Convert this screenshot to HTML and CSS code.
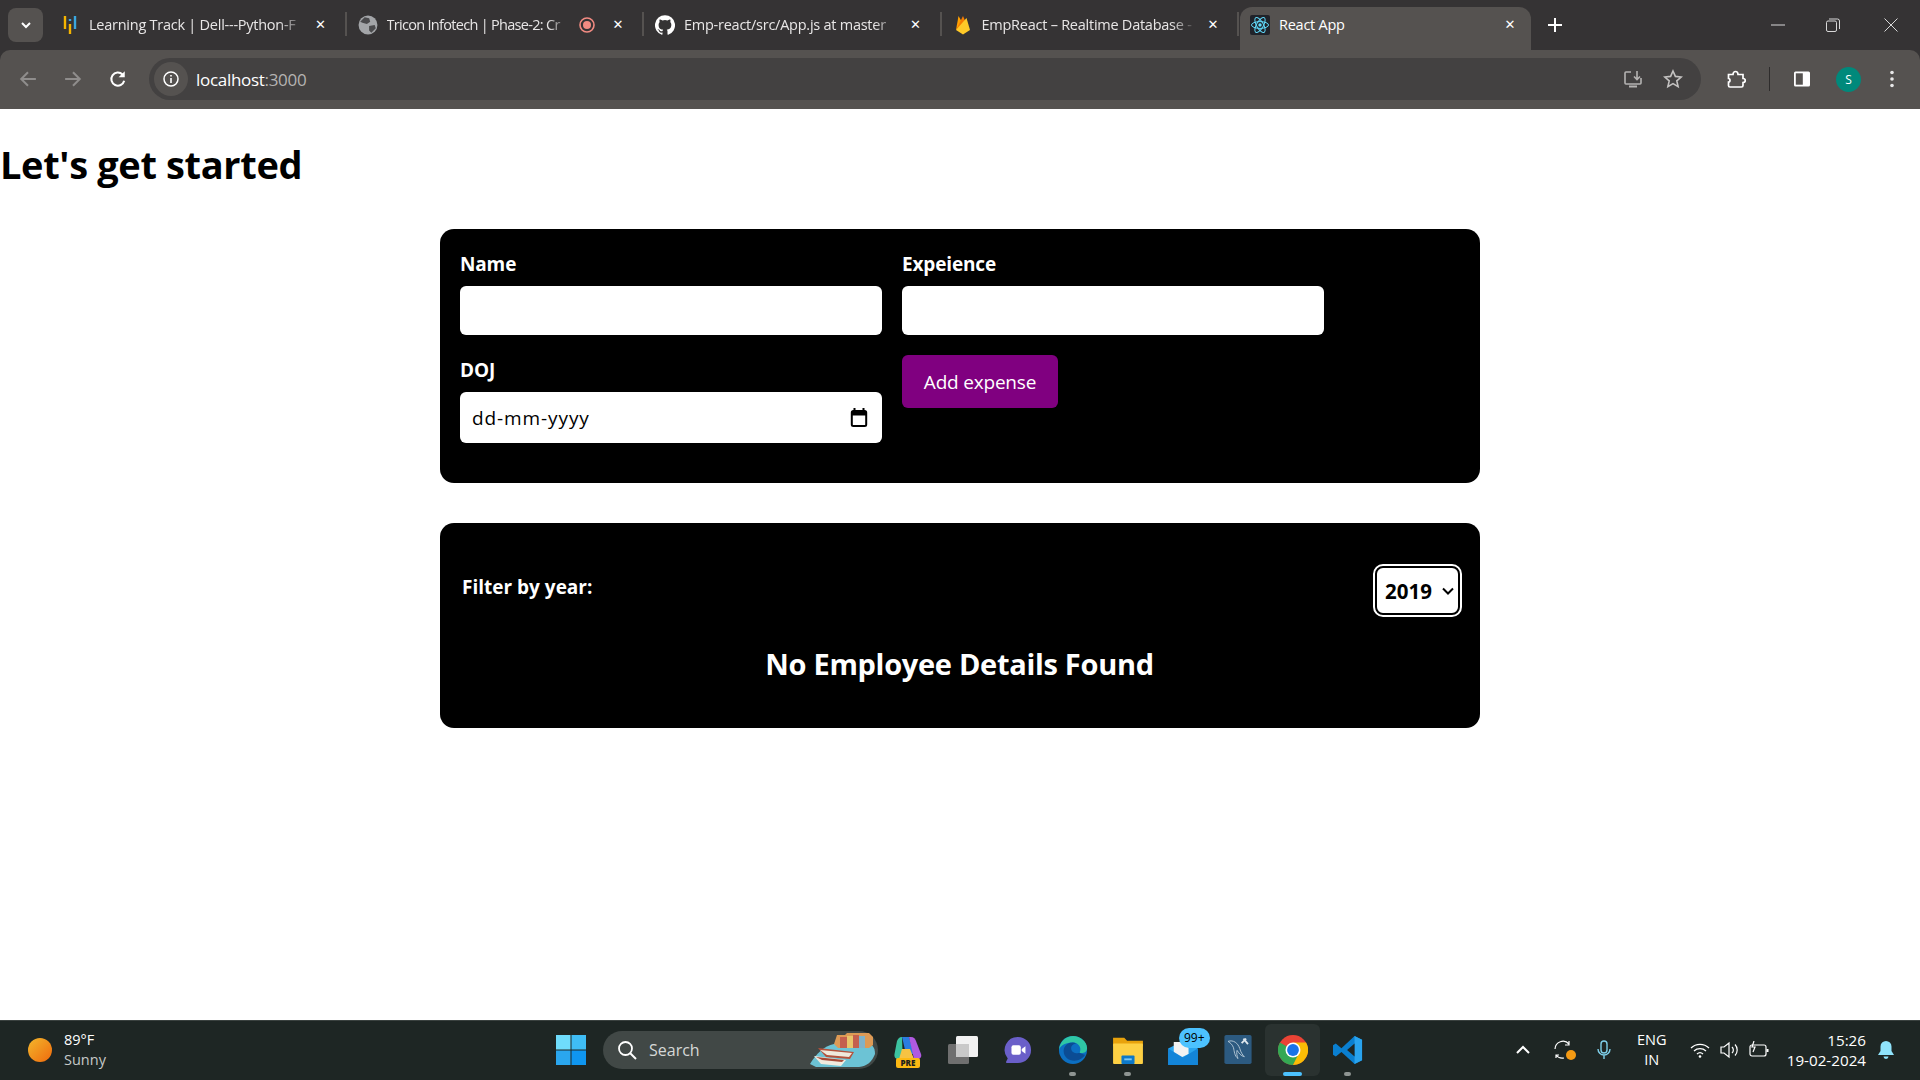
FILE: index.html
```html
<!DOCTYPE html>
<html>
<head>
    <title>React App</title>
    <link rel="stylesheet" href="styles.css">
</head>
<body>
    <div class="browser-top">
        <div class="tab-strip">
            <div class="tab-search">
                <svg width="12" height="12" viewBox="0 0 12 12"><path d="M2 4l4 4 4-4" fill="none" stroke="#fff" stroke-width="2"/></svg>
            </div>
            <div class="tab">
                <svg class="favicon" viewBox="0 0 16 20"><path d="M3 1v13" stroke="#f5b400" stroke-width="2.4"/><path d="M8 9v10" stroke="#f5b400" stroke-width="2.4"/><path d="M8 4v2" stroke="#3aa7e0" stroke-width="2.4"/><path d="M13 1v13" stroke="#3aa7e0" stroke-width="2.4"/></svg>
                <span class="tab-title">Learning Track | Dell---Python-F</span>
                <span class="tab-close">&#10005;</span>
            </div>
            <div class="tab">
                <svg class="favicon" viewBox="0 0 18 18"><circle cx="9" cy="9" r="8.5" fill="#a3a5a8"/><path d="M6 2l4 1 1 3-3 2-4-1-2-1zM10 10l5-1 1 3-4 4-2-2z" fill="#4a4a4c"/></svg>
                <span class="tab-title tab-title-tight">Tricon Infotech | Phase-2: Cr</span>
                <svg class="tab-rec" viewBox="0 0 16 16"><circle cx="8" cy="8" r="7" fill="none" stroke="#f28b82" stroke-width="1.6"/><circle cx="8" cy="8" r="4" fill="#f28b82"/></svg>
                <span class="tab-close">&#10005;</span>
            </div>
            <div class="tab">
                <svg class="favicon" viewBox="0 0 24 24"><path fill="#fff" d="M12 .3a12 12 0 0 0-3.8 23.4c.6.1.8-.3.8-.6v-2c-3.3.7-4-1.6-4-1.6-.6-1.4-1.4-1.8-1.4-1.8-1-.7.1-.7.1-.7 1.2 0 1.9 1.2 1.9 1.2 1 1.8 2.8 1.3 3.5 1 0-.8.4-1.3.7-1.6-2.7-.3-5.5-1.3-5.5-6 0-1.2.5-2.3 1.3-3.1-.2-.4-.6-1.6 0-3.2 0 0 1-.3 3.4 1.2a11.5 11.5 0 0 1 6 0c2.3-1.5 3.3-1.2 3.3-1.2.6 1.6.2 2.8 0 3.2.9.8 1.3 1.9 1.3 3.2 0 4.6-2.8 5.6-5.5 5.9.5.4.9 1 .9 2.2v3.3c0 .3.1.7.8.6A12 12 0 0 0 12 .3"/></svg>
                <span class="tab-title">Emp-react/src/App.js at master</span>
                <span class="tab-close">&#10005;</span>
            </div>
            <div class="tab">
                <svg class="favicon" viewBox="0 0 16 20"><path d="M1 15L3.5 1 7 7z" fill="#ffa000"/><path d="M1 15l7-14 3 7z" fill="#f57c00"/><path d="M1 15L11.5 3 15 15l-7 4.5z" fill="#ffca28"/></svg>
                <span class="tab-title">EmpReact – Realtime Database -</span>
                <span class="tab-close">&#10005;</span>
            </div>
            <div class="tab tab-active">
                <svg class="favicon" viewBox="0 0 20 20"><rect width="20" height="20" rx="2" fill="#20232a"/><g fill="none" stroke="#61dafb" stroke-width="1"><ellipse cx="10" cy="10" rx="8.5" ry="3.4"/><ellipse cx="10" cy="10" rx="8.5" ry="3.4" transform="rotate(60 10 10)"/><ellipse cx="10" cy="10" rx="8.5" ry="3.4" transform="rotate(120 10 10)"/></g><circle cx="10" cy="10" r="1.7" fill="#61dafb"/></svg>
                <span class="tab-title">React App</span>
                <span class="tab-close">&#10005;</span>
            </div>
            <svg class="new-tab" width="14" height="14" viewBox="0 0 14 14"><path d="M7 0v14M0 7h14" stroke="#fff" stroke-width="2"/></svg>
            <div class="window-controls">
                <svg class="win-min" width="14" height="14" viewBox="0 0 14 14"><path d="M0 7h14" stroke="#d8d8d8"/></svg>
                <svg class="win-restore" width="14" height="14" viewBox="0 0 14 14"><rect x=".5" y="3" width="10" height="10.5" rx="1.5" fill="none" stroke="#d8d8d8"/><path d="M3 1h8.5a2 2 0 0 1 2 2v8" fill="none" stroke="#d8d8d8"/></svg>
                <svg width="14" height="14" viewBox="0 0 14 14"><path d="M.5.5l13 13M13.500.5l-13 13" stroke="#d8d8d8"/></svg>
            </div>
        </div>
        <div class="toolbar">
            <svg class="nav-icon" viewBox="0 0 16 16"><path d="M15 8H2M8 2L2 8l6 6" fill="none" stroke="#8f8d8c" stroke-width="1.8"/></svg>
            <svg class="nav-icon" viewBox="0 0 16 16"><path d="M1 8h13M8 2l6 6-6 6" fill="none" stroke="#8f8d8c" stroke-width="1.8"/></svg>
            <svg class="nav-icon" viewBox="0 0 16 16"><path d="M13.500 9.500A5.800 5.800 0 1 1 12 4" fill="none" stroke="#fff" stroke-width="1.800"/><path d="M14 1v5.500H8.500z" fill="#fff"/></svg>
            <div class="address-bar">
                <div class="site-info">
                    <svg width="16" height="16" viewBox="0 0 16 16"><circle cx="8" cy="8" r="7" fill="none" stroke="#fff" stroke-width="1.500"/><path d="M8 7v5M8 4v1.600" stroke="#fff" stroke-width="1.600"/></svg>
                </div>
                <span class="url">localhost<span class="url-port">:3000</span></span>
                <svg class="addr-icon" width="20" height="20" viewBox="0 0 20 20"><path d="M8 3H3a1 1 0 0 0-1 1v10a1 1 0 0 0 1 1h14a1 1 0 0 0 1-1v-5" fill="none" stroke="#b5b3b2" stroke-width="1.600"/><path d="M6 17.500h8" stroke="#b5b3b2" stroke-width="2"/><path d="M14 2v8M11 7.500l3 3 3-3" fill="none" stroke="#b5b3b2" stroke-width="1.600"/></svg>
                <svg class="addr-icon" width="20" height="20" viewBox="0 0 20 20"><path d="M10 2l2.400 5.400 5.800.6-4.400 3.900 1.300 5.700-5.100-3-5.100 3 1.300-5.700L1.800 8l5.800-.6z" fill="none" stroke="#c4c2c1" stroke-width="1.600"/></svg>
            </div>
            <div class="toolbar-right">
                <svg width="20" height="20" viewBox="0 0 20 20"><path d="M4 18a1.500 1.500 0 0 1-1.500-1.500v-3.500c2 0 2-3.500 0-3.500V5.500H7c0-4 5-4 5 0h5v4c3 0 3 4 0 4v3a1.500 1.500 0 0 1-1.500 1.500z" fill="none" stroke="#fff" stroke-width="1.700"/></svg>
                <span class="toolbar-sep"></span>
                <svg width="18" height="18" viewBox="0 0 18 18"><rect x="1" y="1.500" width="16" height="15" rx="1.500" fill="#fff"/><rect x="2.800" y="3.300" width="7" height="11.400" fill="#555250"/></svg>
                <span class="avatar">S</span>
                <svg class="menu-dots" width="4" height="18" viewBox="0 0 4 18"><circle cx="2" cy="2.500" r="1.800" fill="#e8e8e8"/><circle cx="2" cy="9" r="1.800" fill="#e8e8e8"/><circle cx="2" cy="15.500" r="1.800" fill="#e8e8e8"/></svg>
            </div>
        </div>
    </div>

    <div class="page">
        <h2 class="page-title">Let's get started</h2>

        <div class="card form-card">
            <div class="form-grid">
                <div class="field">
                    <label>Name</label>
                    <input type="text" class="text-input">
                </div>
                <div class="field">
                    <label>Expeience</label>
                    <input type="text" class="text-input">
                </div>
                <div class="field">
                    <label>DOJ</label>
                    <div class="date-input">
                        <span>dd-mm-yyyy</span>
                        <svg width="18" height="20" viewBox="0 0 18 20"><path d="M4.500 0v4M13.500 0v4" stroke="#000" stroke-width="2"/><rect x="1.800" y="3" width="14.400" height="15" rx="1.500" fill="none" stroke="#000" stroke-width="2"/><path d="M2 3h14v4.500H2z" fill="#000"/></svg>
                    </div>
                </div>
                <div class="field">
                    <button class="add-btn">Add expense</button>
                </div>
            </div>
        </div>

        <div class="card filter-card">
            <div class="filter-row">
                <span class="filter-label">Filter by year:</span>
                <select class="year-select">
                    <option>2019</option>
                    <option>2020</option>
                    <option>2021</option>
                    <option>2022</option>
                </select>
            </div>
            <h2 class="empty-msg">No Employee Details Found</h2>
        </div>
    </div>

    <div class="taskbar">
        <div class="weather">
            <span class="sun"></span>
            <div class="weather-text">
                <div>89°F</div>
                <div class="weather-sub">Sunny</div>
            </div>
        </div>
        <div class="task-center">
            <svg class="win-logo" width="30" height="30" viewBox="0 0 30 30"><rect width="14.500" height="14.500" fill="#6fdcfb"/><rect x="15.500" width="14.500" height="14.500" fill="#3fbdf5"/><rect y="15.500" width="14.500" height="14.500" fill="#2aa6ee"/><rect x="15.500" y="15.500" width="14.500" height="14.500" fill="#0f96f0"/></svg>
            <div class="search-pill">
                <svg width="20" height="20" viewBox="0 0 20 20"><circle cx="8.500" cy="8.500" r="6.500" fill="none" stroke="#fff" stroke-width="1.800"/><path d="M13 13l6 6" stroke="#fff" stroke-width="2"/></svg>
                <span>Search</span>
                <svg class="search-art" width="66" height="36" viewBox="0 0 66 36"><path d="M0 32C6 22 14 14 24 12h36c4 2 5 6 5 10-3 8-8 12-16 13H6z" fill="#6cc3d5"/><path d="M24 12l3-9h8l2-2h22l4 4v8l-4 3H28z" fill="#dd9a55"/><path d="M30 5h7v11h-7zM43 3h6v13h-6z" fill="#c45f4e"/><path d="M37 4h6v12h-6z" fill="#e9c46a"/><path d="M49 4h6v12h-6z" fill="#7fb2c9"/><path d="M8 16l36 4-4 7-24-2z" fill="#b4523c"/><path d="M10 18l32 3-3 4-22-2z" fill="#efe9dc"/><path d="M4 24l32 4-5 6-20-2z" fill="#f0ebdf"/><path d="M6 25l28 3-2 2-20-2z" fill="#a64a38"/></svg>
            </div>
            <div class="task-icons">
                <div class="task-icon">
                    <svg width="28" height="28" viewBox="0 0 28 28"><path d="M8 1h7l5 17h-8z" fill="#2a7de1"/><path d="M15 1h2c3 0 4 2 5 4l5 13c1 3-1 5-4 5h-3z" fill="#b05ae0"/><path d="M8 1C5 1 4 3 3 5L.5 18c-.5 3 1 5 4 5h7l1-5-4-2z" fill="#3cc3a0"/><path d="M8 13h8l4 10H5z" fill="#f6c343"/></svg>
                    <span class="pre-tag">PRE</span>
                </div>
                <div class="task-icon">
                    <svg width="30" height="28" viewBox="0 0 30 28"><rect x="8" y="0" width="22" height="21" rx="1.500" fill="#f2f2f2"/><rect y="8" width="21" height="20" rx="1.500" fill="#6f6f6f"/><rect x="8" y="8" width="13" height="13" fill="#c9c9c9"/></svg>
                </div>
                <div class="task-icon">
                    <svg width="28" height="28" viewBox="0 0 30 30"><path d="M15 1a14 14 0 0 1 0 28H3c-1 0-1-1-.5-2l1.500-3A14 14 0 0 1 15 1z" fill="#6a5fc9"/><rect x="8" y="10" width="10" height="10" rx="2" fill="#fff"/><path d="M19 14l4-3v8l-4-3z" fill="#fff"/></svg>
                </div>
                <div class="task-icon">
                    <svg width="30" height="30" viewBox="0 0 32 32"><circle cx="16" cy="16" r="15" fill="#0c6fc2"/><path d="M1 16C2 6 9 1 16 1c8 0 15 6 15 13 0 4-4 6-8 5 3-6-2-11-7-11C9 8 3 10 1 16z" fill="#2fc7a5"/><path d="M23 19c-3 1-9 0-9-5 0-3 3-5 6-5-6-3-14 1-14 8 0 7 7 12 15 10 3-1 6-3 8-6-2 0-4-1-6-2z" fill="#0b4c94"/></svg>
                    <span class="run-dot"></span>
                </div>
                <div class="task-icon">
                    <svg width="30" height="28" viewBox="0 0 32 30"><path d="M0 2h12l3 3h17v6H0z" fill="#e8a20c"/><rect y="8" width="32" height="22" rx="1" fill="#fdd044"/><rect x="9" y="21" width="14" height="9" rx="1" fill="#0d78c8"/><rect x="12" y="24" width="8" height="2" fill="#7cc8f5"/></svg>
                    <span class="run-dot"></span>
                </div>
                <div class="task-icon">
                    <svg class="mail-icon" width="30" height="24" viewBox="0 0 32 26"><path d="M0 8L16 0l16 8v18H0z" fill="#2aa5ef"/><path d="M6 1h16v13L14 18 6 13z" fill="#f2f2f2"/><path d="M0 8l16 10 16-10v18H0z" fill="#1385d9"/></svg>
                    <span class="mail-badge">99+</span>
                </div>
                <div class="task-icon">
                    <svg width="28" height="29" viewBox="0 0 30 32"><rect width="30" height="32" rx="2" fill="#2c5a80"/><path d="M4 7c6-2 11 2 13 8 1 4 3 7 5 9-4-1-6-4-8-7-1 3 0 6 1 9-4-3-4-8-5-12C9 11 7 9 4 7z" fill="none" stroke="#b8cbd8" stroke-width="1"/><path d="M21 4l5 6M24 4l-5 5" stroke="#dfe8ee" stroke-width="2"/></svg>
                </div>
                <div class="task-icon task-icon-active">
                    <svg width="30" height="30" viewBox="0 0 32 32"><circle cx="16" cy="16" r="16" fill="#ea4335"/><path d="M16 16L2.100 8A16 16 0 0 0 16 32l8-13z" fill="#34a853"/><path d="M16 8h13.900A16 16 0 0 1 16 32l8-16z" fill="#fbbc05"/><circle cx="16" cy="16" r="8" fill="#fff"/><circle cx="16" cy="16" r="6.300" fill="#1a73e8"/></svg>
                    <span class="run-bar"></span>
                </div>
                <div class="task-icon">
                    <svg width="30" height="30" viewBox="0 0 32 32"><path d="M23 1l8 4v22l-8 4L9 18l-6 5-3-2v-10l3-2 6 5z" fill="#0a7fd0"/><path d="M23 1l8 4v22l-8 4z" fill="#29a3ee"/><path d="M23 9l-8 7 8 7z" fill="#1e2624"/></svg>
                    <span class="run-dot"></span>
                </div>
            </div>
        </div>
        <div class="tray">
            <svg class="tray-chevron" width="14" height="9" viewBox="0 0 14 9"><path d="M1 8l6-6 6 6" fill="none" stroke="#fff" stroke-width="2"/></svg>
            <div class="tray-sync">
                <svg width="20" height="20" viewBox="0 0 20 20"><path d="M1 9a8 8 0 0 1 14-5M15 1v4h-4M5 15l-3 0v3M2 15a8 8 0 0 0 8 3" fill="none" stroke="#fff" stroke-width="1.200"/></svg>
                <span class="sync-dot"></span>
            </div>
            <svg class="tray-mic" width="14" height="20" viewBox="0 0 14 20"><rect x="4" y="1" width="6" height="12" rx="3" fill="none" stroke="#7fd0ea" stroke-width="1.400"/><path d="M1 9a6 6 0 0 0 12 0M7 15v4" fill="none" stroke="#7fd0ea" stroke-width="1.400"/></svg>
            <div class="tray-lang">ENG<br>IN</div>
            <svg class="tray-wifi" width="20" height="16" viewBox="0 0 20 16"><path d="M1 6a13 13 0 0 1 18 0M4 9a9 9 0 0 1 12 0M7 12a4.500 4.500 0 0 1 6 0" fill="none" stroke="#fff" stroke-width="1.300"/><circle cx="10" cy="14.500" r="1.300" fill="#fff"/></svg>
            <svg class="tray-vol" width="20" height="18" viewBox="0 0 20 18"><path d="M1 6h3l5-4v14l-5-4H1z" fill="none" stroke="#fff" stroke-width="1.200"/><path d="M12 6a4 4 0 0 1 0 6M15 3.500a8 8 0 0 1 0 11" fill="none" stroke="#fff" stroke-width="1.200"/></svg>
            <svg class="tray-batt" width="20" height="18" viewBox="0 0 20 18"><rect x="1" y="4" width="16" height="11" rx="2" fill="none" stroke="#fff" stroke-width="1.200"/><rect x="17.500" y="8" width="2" height="3" fill="#fff"/><path d="M5 0L3 6h3L4 11" fill="none" stroke="#fff" stroke-width="1.200"/></svg>
            <div class="tray-clock">15:26<br>19-02-2024</div>
            <svg class="tray-bell" width="18" height="20" viewBox="0 0 18 20"><path d="M9 1a5.500 5.500 0 0 0-5.500 5.500V11L1 15h16l-2.500-4V6.500A5.500 5.500 0 0 0 9 1z" fill="#8fe3fb"/><path d="M6.500 16.500a2.500 2.500 0 0 0 5 0z" fill="#8fe3fb"/></svg>
        </div>
    </div>
</body>
</html>
```

FILE: styles.css
```css
* {
  box-sizing: border-box;
}

html, body {
  height: 100%;
}

body {
  margin: 0;
  display: flex;
  flex-direction: column;
  height: 100vh;
  overflow: hidden;
  font-family: "Open Sans", "Noto Sans", sans-serif;
  background: #fff;
}

/* browser chrome */
.browser-top {
  height: 109px;
  background: #353334;
  flex-shrink: 0;
}

.tab-strip {
  height: 50px;
  display: flex;
  align-items: flex-end;
  position: relative;
}

.tab-search {
  width: 35px;
  height: 34px;
  margin: 0 7px 8px 8px;
  border-radius: 8px;
  background: #555250;
  display: flex;
  align-items: center;
  justify-content: center;
  flex-shrink: 0;
}

.tab {
  width: 297.500px;
  height: 43px;
  padding: 0 12px 8px 10px;
  display: flex;
  align-items: center;
  gap: 9px;
  color: #e8e6e6;
  font-size: 14.500px;
  position: relative;
  flex-shrink: 0;
}

.tab::after {
  content: "";
  position: absolute;
  right: 1px;
  top: 5px;
  height: 24px;
  width: 2px;
  background: #555250;
}

.tab-active {
  background: #555250;
  border-radius: 12px 12px 0 0;
  width: 291px;
  color: #fff;
}

.tab-active::after {
  display: none;
}

.favicon {
  width: 20px;
  height: 20px;
  flex-shrink: 0;
}

.tab-title {
  flex: 1;
  white-space: nowrap;
  overflow: hidden;
  letter-spacing: -0.250px;
  -webkit-mask-image: linear-gradient(to right, #000 88%, transparent 100%);
  mask-image: linear-gradient(to right, #000 88%, transparent 100%);
}

.tab-title-tight {
  letter-spacing: -0.700px;
}

.tab-active .tab-title {
  -webkit-mask-image: none;
  mask-image: none;
}

.tab-rec {
  width: 16px;
  height: 16px;
  flex-shrink: 0;
  margin-right: 7px;
}

.tab-close {
  color: #fff;
  font-size: 13px;
  font-weight: 700;
  width: 14px;
  text-align: center;
  flex-shrink: 0;
  font-family: "DejaVu Sans", sans-serif;
  margin-right: 8px;
}

.tab-active .tab-close {
  margin-right: 2px;
}

.new-tab {
  margin: 0 0 18px 17px;
}

.window-controls {
  margin-left: auto;
  margin-bottom: 18px;
  display: flex;
  padding-right: 22px;
}

.win-restore {
  margin: 0 44px 0 41px;
}

.toolbar {
  height: 59px;
  background: #555250;
  border-radius: 10px 10px 0 0;
  display: flex;
  align-items: center;
  padding: 0 0 1px 19px;
}

.nav-icon {
  width: 18px;
  height: 18px;
  margin-right: 27px;
  flex-shrink: 0;
}

.address-bar {
  width: 1552px;
  height: 42px;
  margin-left: -5px;
  background: #434141;
  border-radius: 21px;
  display: flex;
  align-items: center;
  padding: 0 18px 0 5px;
  gap: 20px;
  flex-shrink: 0;
}

.site-info {
  width: 34px;
  height: 34px;
  border-radius: 50%;
  background: #555250;
  display: flex;
  align-items: center;
  justify-content: center;
  margin-right: -12px;
}

.url {
  color: #fff;
  font-size: 17px;
  flex: 1;
  letter-spacing: -0.300px;
}

.url-port {
  color: #b5b3b2;
}

.toolbar-right {
  margin-left: 25px;
  display: flex;
  align-items: center;
  gap: 23px;
}

.toolbar-sep {
  width: 1px;
  height: 24px;
  background: #2e2c2c;
}

.avatar {
  width: 25px;
  height: 25px;
  border-radius: 50%;
  background: #00897b;
  color: #fff;
  font-size: 12px;
  display: flex;
  align-items: center;
  justify-content: center;
  margin-left: 2px;
}

.menu-dots {
  margin-left: 6px;
}

/* page */
.page {
  flex: 1;
  min-height: 0;
}

.page-title {
  margin: 0;
  padding-top: 25px;
  font-size: 38px;
  line-height: 60px;
  font-weight: 700;
  color: #000;
  letter-spacing: -0.350px;
}

.card {
  width: 1040px;
  margin: 0 auto;
  background: #000;
  border-radius: 14px;
  color: #fff;
}

.form-card {
  margin-top: 35px;
  height: 254px;
  padding: 23px 20px 22px;
}

.form-grid {
  display: grid;
  grid-template-columns: 422px 422px;
  column-gap: 20px;
  row-gap: 23px;
}

.field label {
  display: block;
  font-size: 19px;
  font-weight: 700;
  line-height: 24px;
  margin-bottom: 10px;
  letter-spacing: -0.150px;
}

.text-input {
  display: block;
  width: 100%;
  height: 49px;
  border: 0;
  border-radius: 6px;
  background: #fff;
}

.date-input {
  height: 51px;
  border-radius: 6px;
  background: #fff;
  color: #000;
  font-size: 19px;
  letter-spacing: 0.900px;
  display: flex;
  align-items: center;
  justify-content: space-between;
  padding: 0 14px 0 12px;
}

.add-btn {
  display: block;
  width: 156px;
  height: 53px;
  margin-top: -3px;
  border: 0;
  border-radius: 6px;
  background: #800080;
  color: #fff;
  font-family: inherit;
  font-size: 19px;
  letter-spacing: -0.200px;
}

.filter-card {
  margin-top: 40px;
  height: 205px;
  padding: 43px 21px 0 20px;
}

.filter-row {
  display: flex;
  align-items: flex-start;
  justify-content: space-between;
  height: 48px;
  padding-left: 2px;
}

.filter-label {
  font-size: 19px;
  font-weight: 700;
  margin-top: 8px;
}

.year-select {
  width: 85px;
  height: 49px;
  margin-right: -1px;
  font-family: inherit;
  font-size: 20.500px;
  font-weight: 700;
  color: #000;
  border: 2px solid #000;
  border-radius: 8px;
  outline: 2px solid #fff;
  padding-left: 8px;
  appearance: none;
  -webkit-appearance: none;
  background: #fff url("data:image/svg+xml,%3Csvg xmlns='http://www.w3.org/2000/svg' width='12' height='8' viewBox='0 0 12 8'%3E%3Cpath d='M1 1.500l5 5 5-5' fill='none' stroke='%23000' stroke-width='2'/%3E%3C/svg%3E") no-repeat right 4px center;
}

.empty-msg {
  margin: 30px 0 0;
  text-align: center;
  font-size: 29px;
  line-height: 40px;
  font-weight: 700;
  letter-spacing: -0.300px;
}

/* taskbar */
.taskbar {
  height: 60px;
  flex-shrink: 0;
  background: #1e2624;
  border-top: 1px solid #3a413f;
  display: flex;
  align-items: center;
  padding-bottom: 2px;
  color: #fff;
  font-size: 14.500px;
}

.weather {
  width: 556px;
  padding-left: 28px;
  display: flex;
  align-items: center;
  gap: 12px;
  flex-shrink: 0;
  line-height: 20px;
}

.sun {
  width: 24px;
  height: 24px;
  border-radius: 50%;
  background: linear-gradient(135deg, #f2b72c, #f06a0d);
}

.weather-sub {
  color: #c5c9c8;
}

.task-center {
  display: flex;
  align-items: center;
}

.search-pill {
  width: 275px;
  height: 38px;
  margin-left: 17px;
  padding-left: 14px;
  border-radius: 19px;
  background: #414846;
  display: flex;
  align-items: center;
  gap: 12px;
  color: #d5d8d7;
  font-size: 16px;
  position: relative;
}

.search-art {
  position: absolute;
  right: 2px;
  top: 1px;
}

.task-icons {
  display: flex;
  align-items: center;
  margin-left: 2px;
}

.task-icon {
  width: 55px;
  height: 52px;
  display: flex;
  align-items: center;
  justify-content: center;
  position: relative;
  flex-shrink: 0;
}

.task-icon-active {
  background: #2a3230;
  border-radius: 6px;
}

.mail-icon {
  margin-top: 6px;
}

.run-dot {
  position: absolute;
  bottom: 0;
  left: 24px;
  width: 7px;
  height: 4px;
  border-radius: 2px;
  background: #8e9492;
}

.run-bar {
  position: absolute;
  bottom: 0;
  left: 18px;
  width: 19px;
  height: 4px;
  border-radius: 2px;
  background: #4cc2ff;
}

.pre-tag {
  position: absolute;
  left: 16px;
  bottom: 8px;
  width: 24px;
  height: 10px;
  border-radius: 2px;
  background: #fdb913;
  font-size: 8px;
  line-height: 10px;
  font-weight: 800;
  color: #1e1e1e;
  text-align: center;
}

.mail-badge {
  position: absolute;
  top: 4px;
  left: 24px;
  height: 20px;
  padding: 0 5px;
  border-radius: 10px;
  background: #4cc2ff;
  color: #000;
  font-size: 12px;
  line-height: 20px;
}

.tray {
  margin-left: auto;
  display: flex;
  align-items: center;
  padding-right: 25px;
}

.tray-sync {
  position: relative;
  margin-left: 24px;
  display: flex;
}

.sync-dot {
  position: absolute;
  right: -2px;
  bottom: 0;
  width: 10px;
  height: 10px;
  border-radius: 50%;
  background: #f59a13;
}

.tray-mic {
  margin-left: 23px;
}

.tray-lang {
  margin-left: 23px;
  width: 36px;
  text-align: center;
  line-height: 20px;
}

.tray-wifi {
  margin-left: 20px;
}

.tray-vol {
  margin-left: 10px;
}

.tray-batt {
  margin-left: 9px;
}

.tray-clock {
  margin-left: 18px;
  font-size: 15.200px;
  text-align: right;
  line-height: 20px;
  white-space: nowrap;
}

.tray-bell {
  margin-left: 11px;
}
```
